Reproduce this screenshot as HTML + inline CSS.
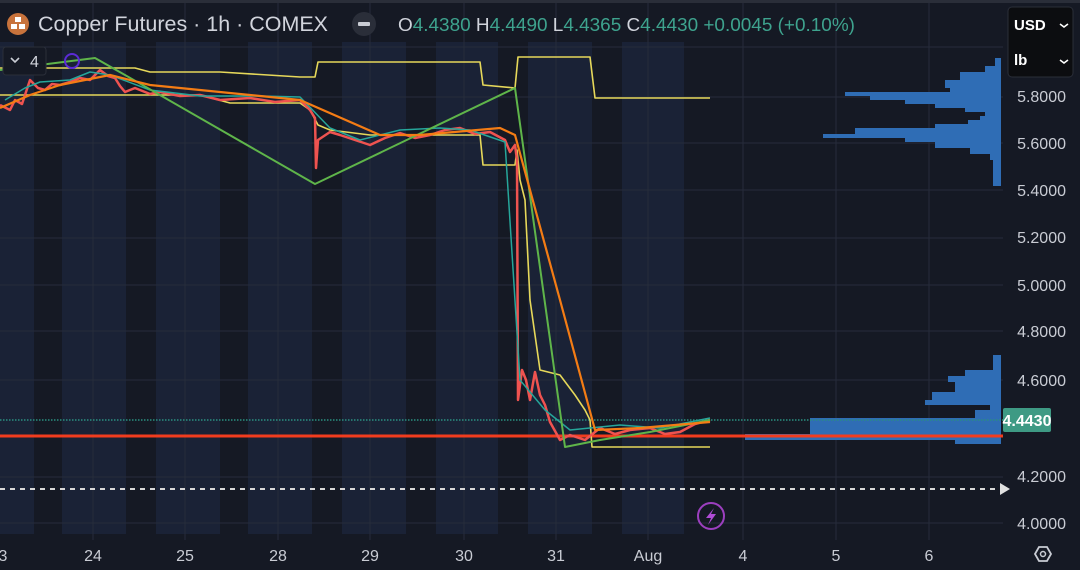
<!DOCTYPE html><html><head><style>
body{margin:0;width:1080px;height:570px;overflow:hidden;background:#151924;font-family:"Liberation Sans",sans-serif}
</style></head><body>
<svg width="1080" height="570" xmlns="http://www.w3.org/2000/svg" style="position:absolute;left:0;top:0">
<rect width="1080" height="570" fill="#151924"/>
<g fill="#1a2236">
<rect x="0" y="42" width="34" height="492"/><rect x="62" y="42" width="64" height="492"/><rect x="156" y="42" width="64" height="492"/><rect x="248" y="42" width="64" height="492"/><rect x="342" y="42" width="64" height="492"/><rect x="436" y="42" width="62" height="492"/><rect x="528" y="42" width="64" height="492"/><rect x="622" y="42" width="62" height="492"/>
</g>
<g stroke="#262c3b" stroke-width="1">
<line x1="93" y1="0" x2="93" y2="540"/><line x1="185" y1="0" x2="185" y2="540"/><line x1="278" y1="0" x2="278" y2="540"/><line x1="370" y1="0" x2="370" y2="540"/><line x1="464" y1="0" x2="464" y2="540"/><line x1="556" y1="0" x2="556" y2="540"/><line x1="648" y1="0" x2="648" y2="540"/><line x1="743" y1="0" x2="743" y2="540"/><line x1="836" y1="0" x2="836" y2="540"/><line x1="929" y1="0" x2="929" y2="540"/>
<line x1="0" y1="47" x2="1003" y2="47"/><line x1="0" y1="97" x2="1003" y2="97"/><line x1="0" y1="143" x2="1003" y2="143"/><line x1="0" y1="190" x2="1003" y2="190"/><line x1="0" y1="238" x2="1003" y2="238"/><line x1="0" y1="285" x2="1003" y2="285"/><line x1="0" y1="331" x2="1003" y2="331"/><line x1="0" y1="380" x2="1003" y2="380"/><line x1="0" y1="477" x2="1003" y2="477"/><line x1="0" y1="523" x2="1003" y2="523"/>
</g>
<g fill="#2f6db5">
<rect x="995" y="58" width="6" height="8"/><rect x="985" y="66" width="16" height="6"/><rect x="960" y="72" width="41" height="8"/><rect x="945" y="80" width="56" height="8"/><rect x="950" y="88" width="51" height="4"/><rect x="845" y="92" width="156" height="4"/><rect x="870" y="96" width="131" height="4"/><rect x="905" y="100" width="96" height="4"/><rect x="935" y="104" width="66" height="4"/><rect x="965" y="108" width="36" height="4"/><rect x="985" y="112" width="16" height="4"/><rect x="980" y="116" width="21" height="4"/><rect x="968" y="120" width="33" height="4"/><rect x="935" y="124" width="66" height="4"/><rect x="855" y="128" width="146" height="6"/><rect x="823" y="134" width="178" height="4"/><rect x="905" y="138" width="96" height="4"/><rect x="935" y="142" width="66" height="6"/><rect x="970" y="148" width="31" height="6"/><rect x="990" y="154" width="11" height="6"/><rect x="993" y="160" width="8" height="26"/>
<rect x="993" y="355" width="8" height="15"/><rect x="965" y="370" width="36" height="6"/><rect x="948" y="376" width="53" height="6"/><rect x="955" y="382" width="46" height="10"/><rect x="932" y="392" width="69" height="8"/><rect x="925" y="400" width="76" height="5"/><rect x="990" y="405" width="11" height="5"/><rect x="975" y="410" width="26" height="8"/><rect x="810" y="418" width="191" height="16"/><rect x="745" y="434" width="256" height="6"/><rect x="955" y="440" width="46" height="4"/>
</g>
<line x1="0" y1="420" x2="1003" y2="420" stroke="#2a8f80" stroke-width="1.5" stroke-dasharray="1.5 1.5"/>
<line x1="0" y1="436" x2="1003" y2="436" stroke="#f23c1e" stroke-width="3"/>
<line x1="0" y1="489" x2="1000" y2="489" stroke="#d8d8d8" stroke-width="2" stroke-dasharray="5 5"/>
<polygon points="1000,483 1010,489 1000,495" fill="#e0e0e0"/>
<g fill="none" stroke-width="2" stroke-linejoin="round">
<polyline stroke="#e6d85a" stroke-width="1.6" points="0,68 135,68 150,72 220,72 300,77 315,77 318,62 480,62 483,85 515,88 518,57 590,57 595,98 710,98"/>
<polyline stroke="#e6d85a" stroke-width="1.6" points="0,95 200,95 230,103 300,103 310,110 318,125 330,130 370,135 480,135 483,165 515,165 517,150 520,180 525,200 530,300 540,370 560,375 575,395 585,410 590,420 592,447 710,447"/>
<polyline stroke="#ef5350" stroke-width="2.5" points="0,105 10,110 15,100 22,104 30,80 38,88 45,90 52,84 60,85 70,82 80,78 90,80 100,70 108,76 115,78 120,86 125,92 135,88 140,90 150,94 160,92 180,96 200,95 220,100 250,98 275,102 300,100 310,110 315,118 316,168 318,140 330,132 340,135 355,140 370,145 385,138 400,133 415,138 430,135 445,130 460,128 475,134 490,132 505,140 510,152 515,145 517,160 518,400 522,370 526,380 530,400 535,372 540,395 545,405 550,422 560,440 570,435 585,440 600,428 615,434 630,430 650,428 665,434 680,432 695,424 710,420"/>
<polyline stroke="#26a69a" stroke-width="1.5" points="5,100 25,88 40,82 70,80 90,72 110,75 150,90 200,96 260,96 300,97 330,128 360,140 400,130 440,128 470,130 505,142 520,380 545,410 570,430 620,425 660,428 710,418"/>
<polyline stroke="#5fb54a" points="0,70 95,58 125,75 315,184 515,88 565,447 600,440 650,432 710,420"/>
<polyline stroke="#f47c14" stroke-width="2.2" points="0,108 30,95 60,85 110,75 150,85 300,100 380,135 420,135 500,128 515,135 560,300 595,430 640,428 710,422"/>
</g>
<circle cx="72" cy="61" r="7" fill="none" stroke="#5b2bd6" stroke-width="2"/>
<circle cx="711" cy="516" r="13" fill="none" stroke="#9c3fbf" stroke-width="2"/>
<path d="M714,508 L706,518 L711,518 L708,525 L716,514 L711,514 Z" fill="#b04cd6"/>
<rect x="1003" y="408" width="48" height="24" rx="2" fill="#3e9a84"/>
<text x="1027" y="426" fill="#fff" font-size="16" font-weight="bold" text-anchor="middle" font-family="Liberation Sans">4.4430</text>
<g fill="#c9ccd4" font-size="16" font-family="Liberation Sans" text-anchor="end">
<text x="1066" y="102">5.8000</text><text x="1066" y="149">5.6000</text><text x="1066" y="196">5.4000</text><text x="1066" y="243">5.2000</text><text x="1066" y="291">5.0000</text><text x="1066" y="337">4.8000</text><text x="1066" y="386">4.6000</text><text x="1066" y="482">4.2000</text><text x="1066" y="529">4.0000</text>
</g>
<g fill="#c9ccd4" font-size="16" font-family="Liberation Sans" text-anchor="middle">
<text x="3" y="561">3</text><text x="93" y="561">24</text><text x="185" y="561">25</text><text x="278" y="561">28</text><text x="370" y="561">29</text><text x="464" y="561">30</text><text x="556" y="561">31</text><text x="648" y="561">Aug</text><text x="743" y="561">4</text><text x="836" y="561">5</text><text x="929" y="561">6</text>
</g>
<polygon points="1035,554 1039,547 1047,547 1051,554 1047,561 1039,561" fill="none" stroke="#c9ccd4" stroke-width="1.8"/>
<circle cx="1043" cy="554" r="2.5" fill="none" stroke="#c9ccd4" stroke-width="1.5"/>
<rect x="0" y="0" width="1080" height="3" fill="#2a2e39"/>
<rect x="1008" y="7" width="65" height="70" rx="4" fill="#0c0d10" stroke="#2a2e39"/>
<text x="1014" y="30" fill="#fff" font-size="15" font-weight="bold">USD</text>
<text x="1014" y="65" fill="#fff" font-size="15" font-weight="bold">lb</text>
<path d="M1060,24 l4,3 l4,-3 M1060,60 l4,3 l4,-3" stroke="#fff" stroke-width="1.6" fill="none"/>
<circle cx="18" cy="24" r="11" fill="#c8733c"/>
<g fill="#fff"><rect x="15" y="17" width="6" height="5"/><rect x="11" y="24" width="6" height="5"/><rect x="19" y="24" width="6" height="5"/></g>
<text x="38" y="31" fill="#d1d4dc" font-size="21" font-family="Liberation Sans" textLength="290" lengthAdjust="spacingAndGlyphs">Copper Futures · 1h · COMEX</text>
<circle cx="364" cy="24" r="12" fill="#2a2e39"/><rect x="358" y="22" width="12" height="4" rx="1" fill="#c9ccd4"/>
<text x="398" y="31" font-size="18" font-family="Liberation Sans" textLength="457" lengthAdjust="spacingAndGlyphs"><tspan fill="#d1d4dc">O</tspan><tspan fill="#3ea38e">4.4380 </tspan><tspan fill="#d1d4dc">H</tspan><tspan fill="#3ea38e">4.4490 </tspan><tspan fill="#d1d4dc">L</tspan><tspan fill="#3ea38e">4.4365 </tspan><tspan fill="#d1d4dc">C</tspan><tspan fill="#3ea38e">4.4430 +0.0045 (+0.10%)</tspan></text>
<rect x="3" y="47" width="43" height="28" rx="3" fill="#151924" stroke="#2a2e39"/>
<path d="M11,58 l4,4 l4,-4" stroke="#c9ccd4" stroke-width="1.6" fill="none"/>
<text x="30" y="67" fill="#d1d4dc" font-size="16">4</text>
</svg>
</body></html>
